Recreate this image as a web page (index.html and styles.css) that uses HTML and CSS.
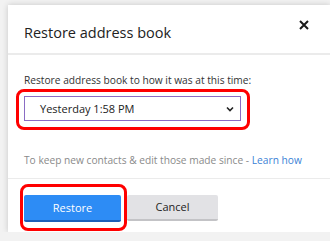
FILE: index.html
```html
<!DOCTYPE html>
<html lang="en">
<head>
    <meta charset="UTF-8">
    <meta name="viewport" content="width=device-width, initial-scale=1.0">
    <title>Restore address book</title>
    <link rel="stylesheet" href="styles.css">
</head>
<body>
    <div class="dialog">
        <div class="dialog-header">
            <h1>Restore address book</h1>
            <button class="close" aria-label="Close">
                <svg width="10" height="10" viewBox="0 0 10 10">
                    <path d="M1 1 L9 9 M9 1 L1 9" stroke="#1a1a1a" stroke-width="2" fill="none"/>
                </svg>
            </button>
        </div>
        <div class="dialog-body">
            <label class="field-label">Restore address book to how it was at this time:</label>
            <div class="highlight select-highlight">
                <div class="select">
                    <span>Yesterday 1:58 PM</span>
                    <svg width="8" height="6" viewBox="0 0 8 6">
                        <path d="M1 1.5 L4 4.5 L7 1.5" stroke="#222" stroke-width="1.6" fill="none"/>
                    </svg>
                </div>
            </div>
            <p class="help">To keep new contacts &amp; edit those made since - <a href="#">Learn how</a></p>
        </div>
        <div class="dialog-footer">
            <div class="highlight button-highlight">
                <button class="btn btn-primary">Restore</button>
            </div>
            <button class="btn btn-secondary">Cancel</button>
        </div>
    </div>
</body>
</html>
```

FILE: styles.css
```css
body {
    margin: 0;
    padding: 5px 0 0 8px;
    background-color: #f2f2f2;
    font-family: "Open Sans", "Noto Sans", sans-serif;
    color: #262626;
    overflow: hidden;
}

.dialog {
    width: 322px;
    height: 227px;
    background-color: #fff;
    box-shadow: 0 0 6px rgba(0, 0, 0, 0.18);
}

.dialog-header {
    display: flex;
    align-items: center;
    justify-content: space-between;
    height: 48px;
    padding: 0 16px;
    border-bottom: 2px solid #ebebeb;
}

.dialog-header h1 {
    margin: 7px 0 0 0;
    font-size: 14.5px;
    font-weight: normal;
    color: #222;
}

.close {
    margin: -9px 5px 0 0;
    padding: 0;
    border: none;
    background: none;
    display: flex;
}

.dialog-body {
    padding: 18px 16px 0 16px;
    height: 105px;
    border-bottom: 1px solid #ebebeb;
}

.field-label {
    display: block;
    font-size: 10.2px;
    color: #333;
    margin-bottom: 2px;
}

.highlight {
    border: 3px solid #f00;
    border-radius: 8px;
}

.select-highlight {
    width: 217px;
    margin-left: -8px;
    padding: 4px 6px 6px 5px;
}

.select {
    display: flex;
    align-items: center;
    justify-content: space-between;
    height: 23px;
    padding: 0 6px 0 15px;
    border: 1px solid #8a6cc4;
    font-size: 11px;
    color: #222;
}

.help {
    margin: 23px 0 0 0;
    font-size: 10.2px;
    color: #8a8a8a;
}

.help a {
    color: #3b82d6;
    text-decoration: none;
}

.dialog-footer {
    display: flex;
    align-items: center;
    padding: 5px 0 0 12px;
}

.button-highlight {
    padding: 8px 3px 6px 1px;
}

.btn {
    font-family: inherit;
    font-size: 11px;
    border: none;
    border-radius: 2px;
}

.btn-primary {
    width: 97px;
    height: 27px;
    background-color: #2d8cf5;
    color: #fff;
    border-bottom: 2px solid #1c5fb8;
}

.btn-secondary {
    width: 91px;
    height: 26px;
    background-color: #e2e2e5;
    color: #222;
    border-bottom: 2px solid #c3c3c6;
}
```
